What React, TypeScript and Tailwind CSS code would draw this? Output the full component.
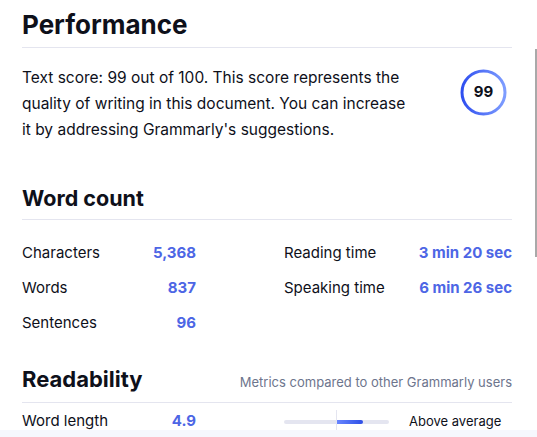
const textDark = "text-[#0e101a]";

function ScoreRing({ score }: { score: number }) {
  return (
    <div className="relative w-[47px] h-[47px] shrink-0">
      <svg width="47" height="47" viewBox="0 0 47 47" className="absolute inset-0">
        <defs>
          <linearGradient id="ring" x1="0" y1="0" x2="1" y2="0">
            <stop offset="0%" stopColor="#2f4ff0" />
            <stop offset="100%" stopColor="#7e9dff" />
          </linearGradient>
        </defs>
        <circle cx="23.5" cy="23.5" r="21.5" fill="none" stroke="url(#ring)" strokeWidth="3" />
      </svg>
      <div className={`absolute inset-0 flex items-center justify-center text-[15px] font-bold ${textDark}`}>
        {score}
      </div>
    </div>
  );
}

function Stat({ label, value }: { label: string; value: string }) {
  return (
    <div className="flex h-[35px] items-center justify-between">
      <span className={`text-[15px] ${textDark}`}>{label}</span>
      <span className="text-[15px] font-bold text-[#4d66e5]">{value}</span>
    </div>
  );
}

export default function App() {
  return (
    <div className="relative w-[537px] h-[437px] overflow-hidden bg-white font-['Inter',sans-serif]">
      <div className="w-[490px] ml-[22px]">
        {/* performance */}
        <h1 className={`pt-[9px] pb-[6px] text-[26px] leading-[32px] font-bold border-b border-[#e4e5ef] ${textDark}`}>
          Performance
        </h1>
        <div className="flex items-start justify-between pt-[17px]">
          <p className={`w-[392px] text-[15.5px] leading-[26px] ${textDark}`}>
            Text score: 99 out of 100. This score represents the quality of writing in this document. You can
            increase it by addressing Grammarly's suggestions.
          </p>
          <div className="mt-[4px] mr-[5px]">
            <ScoreRing score={99} />
          </div>
        </div>

        {/* word count */}
        <h2 className={`mt-[42px] pb-[8px] text-[21.5px] leading-[26px] font-bold border-b border-[#e4e5ef] ${textDark}`}>
          Word count
        </h2>
        <div className="grid grid-cols-[174px_228px] gap-x-[88px] pt-[16px]">
          <div>
            <Stat label="Characters" value="5,368" />
            <Stat label="Words" value="837" />
            <Stat label="Sentences" value="96" />
          </div>
          <div>
            <Stat label="Reading time" value="3 min 20 sec" />
            <Stat label="Speaking time" value="6 min 26 sec" />
          </div>
        </div>

        {/* readability */}
        <div className="mt-[24px] pb-[9px] flex items-baseline justify-between border-b border-[#e4e5ef]">
          <h2 className={`text-[22px] leading-[28px] font-bold ${textDark}`}>Readability</h2>
          <span className="text-[13px] text-[#6d758d]">Metrics compared to other Grammarly users</span>
        </div>
        <div className="grid grid-cols-[174px_228px] gap-x-[88px] pt-[1px]">
          <Stat label="Word length" value="4.9" />
          <div className="flex h-[35px] items-center">
            <div className="relative w-[105px] h-[4px] shrink-0 rounded-full bg-[#e4e5f0]">
              <div className="absolute left-[52px] top-0 h-[4px] w-[27px] rounded-r-full bg-gradient-to-r from-[#6a86ff] to-[#2e4ee6]" />
              <div className="absolute left-[52px] top-[-10px] h-[24px] w-px bg-[#e4e5f0]" />
            </div>
            <span className={`ml-[20px] whitespace-nowrap text-[13px] ${textDark}`}>Above average</span>
          </div>
        </div>
      </div>

      {/* scrollbar trace */}
      <div className="absolute left-[535px] top-[49px] h-[208px] w-[2px] bg-[#a9a9a9]" />
      {/* footer strip */}
      <div className="absolute left-0 right-0 bottom-0 h-[7px] bg-[#f6f7fd]" />
    </div>
  );
}
